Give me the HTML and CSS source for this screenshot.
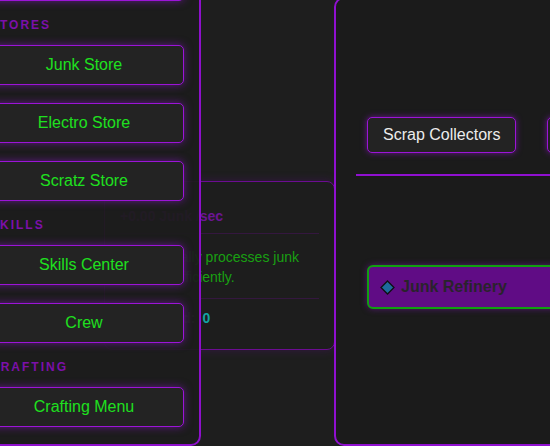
FILE: index.html
```html
<!DOCTYPE html>
<html>
<head>
<meta charset="utf-8">
<link rel="stylesheet" href="styles.css">
</head>
<body>
<div class="layout">
  <main class="center">
    <section class="card">
      <div class="card-title">+0.00 Junk /sec</div>
      <p class="card-desc">automatically processes junk fast and efficiently.</p>
      <div class="card-stat"><span class="stat-label">Processed:</span> <span class="stat-value">0</span></div>
    </section>
  </main>
  <section class="panel">
    <div class="tabs">
      <button class="tab">Scrap Collectors</button>
      <button class="tab">Refineries</button>
    </div>
    <div class="rule"></div>
    <div class="item">
      <svg class="diamond" width="15" height="15" viewBox="0 0 15 15"><polygon points="7.5,1 14,7.5 7.5,14 1,7.5" fill="#1d6a9c" stroke="#0f0f14" stroke-width="1.3"/></svg>
      <span class="item-name">Junk Refinery</span>
    </div>
  </section>
</div>
<nav class="sidebar">
  <div class="group">
    <button class="nav-btn">Main Menu</button>
  </div>
  <div class="section-title">STORES</div>
  <div class="group">
    <button class="nav-btn">Junk Store</button>
    <button class="nav-btn">Electro Store</button>
    <button class="nav-btn">Scratz Store</button>
  </div>
  <div class="section-title">SKILLS</div>
  <div class="group">
    <button class="nav-btn">Skills Center</button>
    <button class="nav-btn">Crew</button>
  </div>
  <div class="section-title">CRAFTING</div>
  <div class="group">
    <button class="nav-btn">Crafting Menu</button>
  </div>
</nav>
</body>
</html>
```

FILE: styles.css
```css
html, body {
  margin: 0;
  padding: 0;
}
body {
  width: 550px;
  height: 446px;
  overflow: hidden;
  position: relative;
  background: #1e1e1e;
  font-family: "Liberation Sans", Arial, sans-serif;
}
.layout {
  display: flex;
  margin-left: -33px;
  height: 446px;
}
.center {
  flex: 0 0 368px;
  box-sizing: border-box;
  padding: 181px 0 0 137px;
  margin-right: -1px;
}
.card {
  background: #1d1d1d;
  border: 1px solid #6c0c92;
  border-radius: 8px;
  padding: 15px;
  box-shadow: 0 0 10px rgba(120, 0, 180, 0.25);
}
.card-title {
  font-size: 14px;
  font-weight: bold;
  line-height: 20px;
  color: #6b1592;
  padding: 9px 0 7px;
  border-bottom: 1px solid #34173f;
  white-space: nowrap;
}
.card-desc {
  margin: 0;
  font-size: 14px;
  line-height: 20px;
  color: #19a012;
  padding: 13px 0 11px;
  border-bottom: 1px solid #34173f;
}
.card-stat {
  font-size: 14px;
  font-weight: bold;
  line-height: 20px;
  padding: 9px 0 6px;
}
.stat-label {
  color: #5a5a5a;
}
.stat-value {
  color: #13a3a3;
  margin-left: 3px;
}
.panel {
  position: relative;
  flex: 0 0 420px;
  margin-top: -3px;
  background: #1b1b1b;
  border: 2px solid #9010d0;
  border-radius: 10px;
  padding: 0 20px;
}
.tabs {
  display: flex;
  gap: 31px;
  padding-left: 11px;
  margin-top: 118px;
}
.tab {
  height: 36px;
  padding: 0 15px;
  font-family: "Liberation Sans", Arial, sans-serif;
  font-size: 16px;
  color: #ececec;
  background: #232323;
  border: 1px solid #9c14d8;
  border-radius: 5px;
  box-shadow: 0 0 6px rgba(155, 20, 220, 0.6);
  white-space: nowrap;
}
.rule {
  height: 2px;
  background: #9010d0;
  margin-top: 21px;
}
.item {
  margin: 89px 0 0 11px;
  height: 40px;
  display: flex;
  align-items: center;
  gap: 6px;
  padding-left: 11px;
  background: #600c85;
  border: 2px solid #10a010;
  border-radius: 6px;
  box-shadow: 0 0 6px rgba(140, 20, 200, 0.5);
}
.diamond {
  display: block;
}
.item-name {
  font-size: 16px;
  font-weight: bold;
  color: #29232b;
}
.sidebar {
  position: absolute;
  left: -33px;
  top: -56px;
  width: 200px;
  padding: 15px 15px 17px;
  display: flex;
  flex-direction: column;
  gap: 15px;
  background: rgba(28, 28, 28, 0.93);
  border: 2px solid #8e10cc;
  border-radius: 10px;
}
.group {
  display: flex;
  flex-direction: column;
  gap: 18px;
}
.nav-btn {
  height: 40px;
  width: 200px;
  font-family: "Liberation Sans", Arial, sans-serif;
  font-size: 16px;
  color: #1fe01f;
  background: #232323;
  border: 1px solid #9c14d8;
  border-radius: 5px;
  box-shadow: 0 0 8px rgba(150, 20, 220, 0.55);
}
.section-title {
  font-size: 12px;
  font-weight: bold;
  line-height: 14px;
  letter-spacing: 2px;
  color: #7c10aa;
  padding-left: 6px;
  margin: 2px 0 -2px;
}
```
